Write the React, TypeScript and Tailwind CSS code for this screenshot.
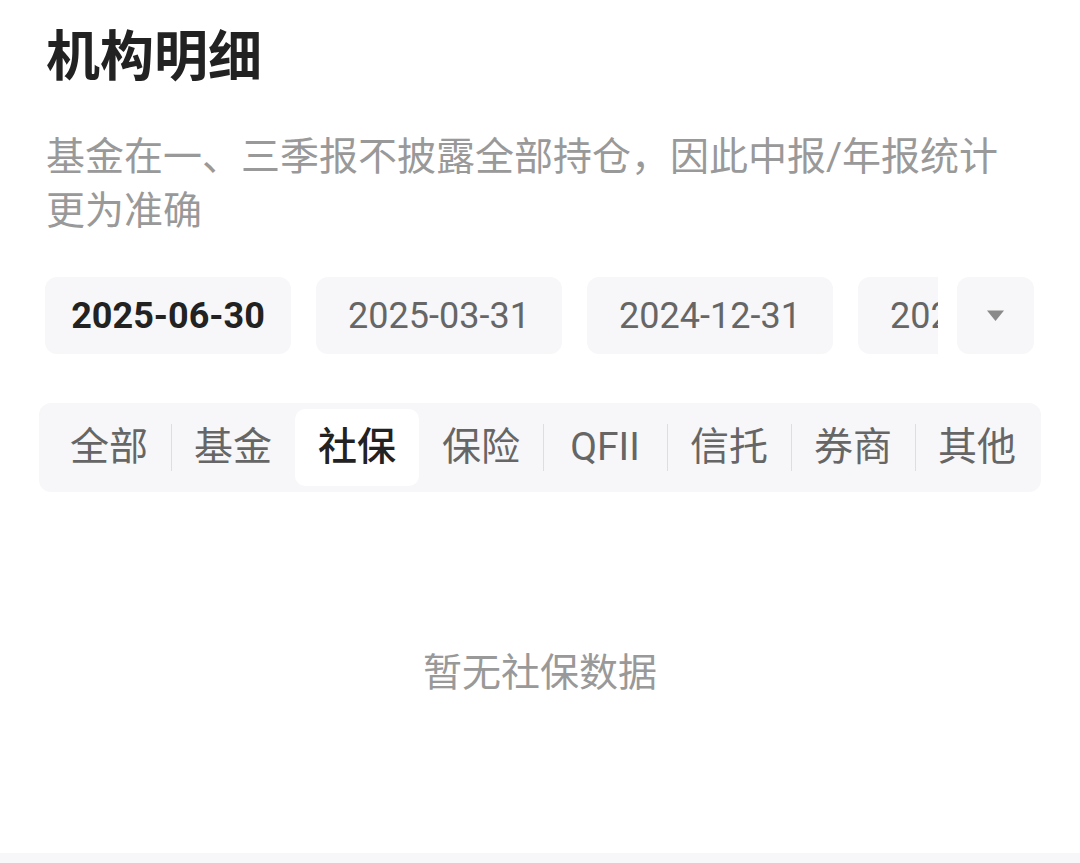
import { useState } from "react";

const DATES = ["2025-06-30", "2025-03-31", "2024-12-31", "2024-09-30", "2024-06-30"];
const TABS = ["全部", "基金", "社保", "保险", "QFII", "信托", "券商", "其他"];

export default function App() {
  const [date, setDate] = useState(0);
  const [tab, setTab] = useState(2);

  return (
    <div
      className="w-[1080px] h-[863px] bg-white flex flex-col overflow-hidden"
      style={{ fontFamily: "Roboto, 'Noto Sans CJK SC', sans-serif" }}
    >
      <div className="flex-1 flex flex-col">
        <h1 className="pl-[46px] pt-[22px] text-[54px] leading-[72px] font-bold text-[#222]">机构明细</h1>

        <p className="pl-[46px] mt-[36px] w-[1020px] text-[39px] leading-[54px] text-[#999]">
          基金在一、三季报不披露全部持仓，因此中报/年报统计更为准确
        </p>

        {/* report dates */}
        <div className="mt-[39px] pl-[45px] pr-[46px] flex items-center">
          <div className="flex-1 flex gap-[25px] overflow-hidden">
            {DATES.map((d, i) => (
              <button
                key={d}
                onClick={() => setDate(i)}
                className={
                  "shrink-0 w-[246px] h-[77px] rounded-[12px] bg-[#f7f7f9] text-[36px] " +
                  (i === date ? "font-bold text-[#222]" : "text-[#666]")
                }
              >
                {d}
              </button>
            ))}
          </div>
          <button className="ml-[19px] w-[77px] h-[77px] rounded-[12px] bg-[#f7f7f9] flex items-center justify-center shrink-0">
            <svg width="19" height="13" viewBox="0 0 19 13">
              <path d="M1 1.5h17l-8.5 10.5z" fill="#8a8a8a" />
            </svg>
          </button>
        </div>

        {/* institution tabs */}
        <div className="mt-[49px] mx-[39px] h-[89px] rounded-[12px] bg-[#f7f7f9] pl-[8px] pr-[2px] py-[6px] flex items-center">
          {TABS.map((t, i) => (
            <div key={t} className="flex-1 h-full flex items-center relative">
              {i > 0 && i !== tab && i - 1 !== tab && (
                <div className="absolute left-0 top-[15px] w-px h-[47px] bg-[#dedede]" />
              )}
              <button
                onClick={() => setTab(i)}
                className={
                  "w-full h-full rounded-[10px] text-[39px] " +
                  (i === tab ? "bg-white text-[#222] font-medium" : "text-[#666]")
                }
              >
                {t}
              </button>
            </div>
          ))}
        </div>

        <div className="mt-[154px] text-center text-[39px] leading-[54px] text-[#999]">
          暂无{TABS[tab]}数据
        </div>
      </div>
      <div className="h-[10px] bg-[#f7f7f9]" />
    </div>
  );
}
